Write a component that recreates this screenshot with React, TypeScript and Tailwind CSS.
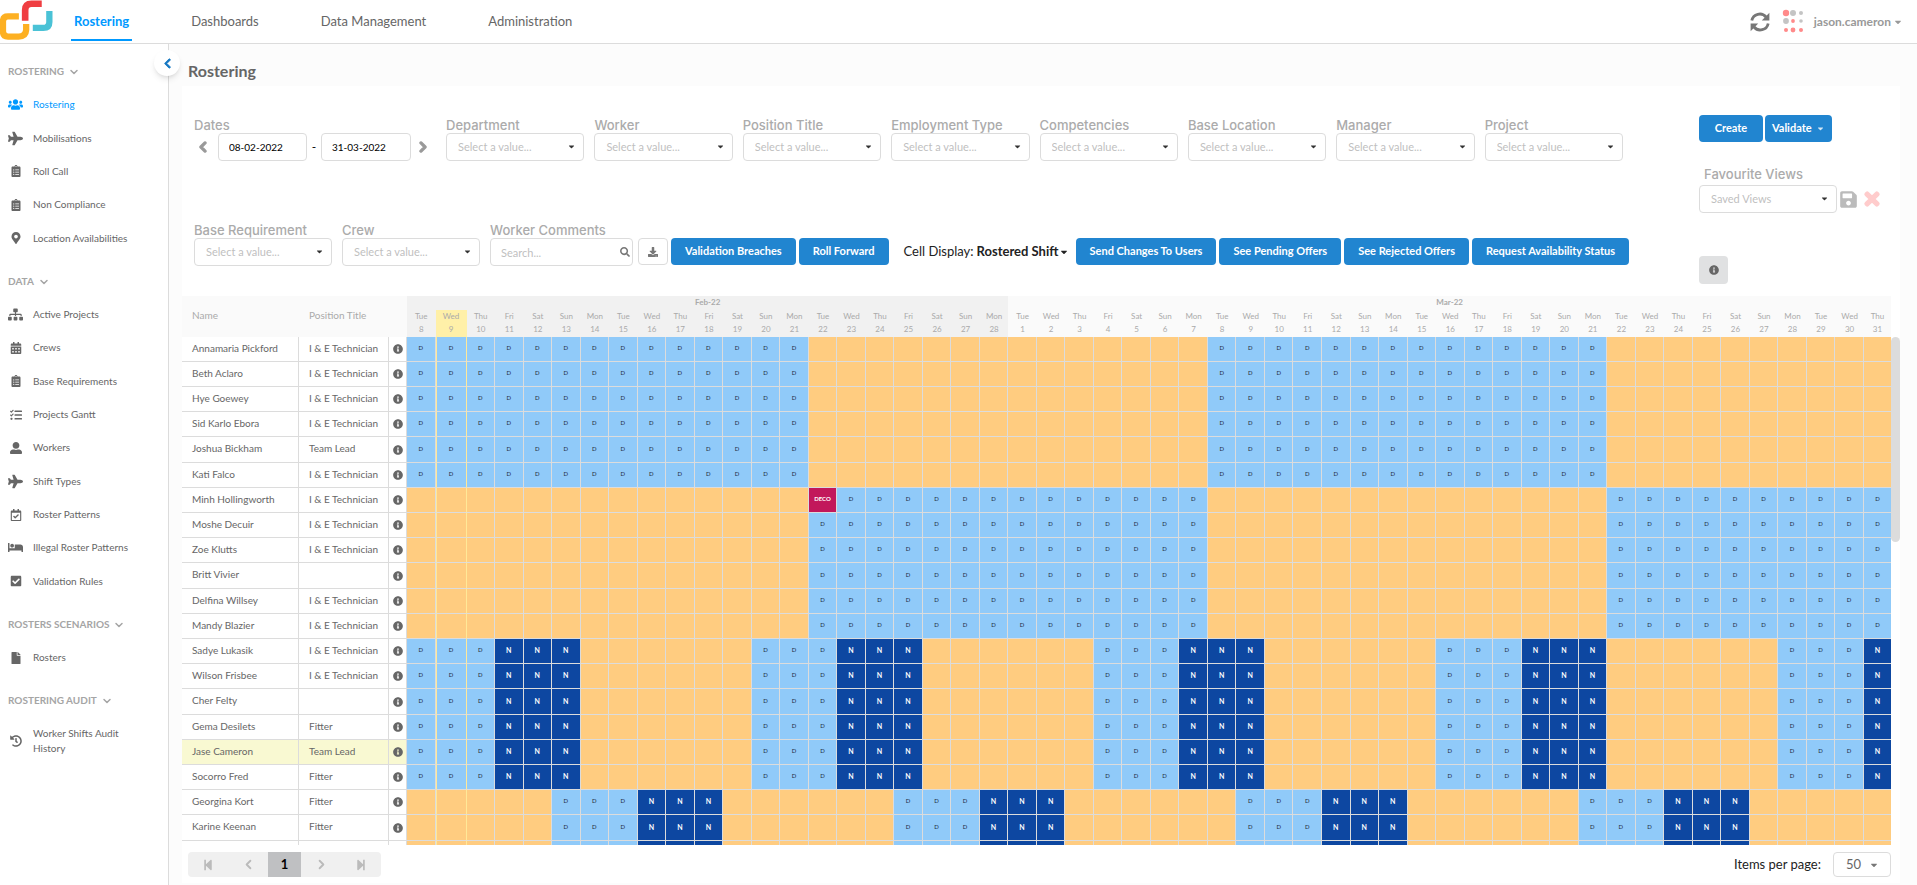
// App.tsx
import { useState } from "react";
import type { ReactNode } from "react";
import type { IconType } from "react-icons";
import {
  FaBed,
  FaCalendarAlt,
  FaCaretDown,
  FaCheckSquare,
  FaChevronLeft,
  FaChevronRight,
  FaClipboardList,
  FaDownload,
  FaFile,
  FaHistory,
  FaInfoCircle,
  FaMapMarkerAlt,
  FaPlane,
  FaRegCalendarCheck,
  FaSave,
  FaSearch,
  FaSitemap,
  FaStepBackward,
  FaStepForward,
  FaTasks,
  FaTimes,
  FaUserAlt,
  FaUsers,
} from "react-icons/fa";
import { FiChevronDown, FiChevronLeft, FiChevronRight } from "react-icons/fi";

interface NavItem {
  label: string;
  icon: IconType;
  wide?: boolean;
}

interface NavSection {
  title: string;
  listClass: string;
  items: NavItem[];
}

interface Worker {
  name: string;
  position: string;
  pattern: string;
}

const tabs = ["Rostering", "Dashboards", "Data Management", "Administration"];

const sections: NavSection[] = [
  {
    title: "ROSTERING",
    listClass: "h-[167px]",
    items: [
      { label: "Rostering", icon: FaUsers, wide: true },
      { label: "Mobilisations", icon: FaPlane, wide: true },
      { label: "Roll Call", icon: FaClipboardList },
      { label: "Non Compliance", icon: FaClipboardList },
      { label: "Location Availabilities", icon: FaMapMarkerAlt },
    ],
  },
  {
    title: "DATA",
    listClass: "h-[300px]",
    items: [
      { label: "Active Projects", icon: FaSitemap, wide: true },
      { label: "Crews", icon: FaCalendarAlt },
      { label: "Base Requirements", icon: FaClipboardList },
      { label: "Projects Gantt", icon: FaTasks },
      { label: "Workers", icon: FaUserAlt },
      { label: "Shift Types", icon: FaPlane, wide: true },
      { label: "Roster Patterns", icon: FaRegCalendarCheck },
      { label: "Illegal Roster Patterns", icon: FaBed, wide: true },
      { label: "Validation Rules", icon: FaCheckSquare },
    ],
  },
  {
    title: "ROSTERS SCENARIOS",
    listClass: "h-[33px]",
    items: [{ label: "Rosters", icon: FaFile }],
  },
  {
    title: "ROSTERING AUDIT",
    listClass: "h-[48px]",
    items: [{ label: "Worker Shifts Audit History", icon: FaHistory }],
  },
];

const filters = [
  "Department",
  "Worker",
  "Position Title",
  "Employment Type",
  "Competencies",
  "Base Location",
  "Manager",
  "Project",
];

// One letter per day: D = day shift, N = night shift, X = decompression, . = off
const TWO_WEEKS_ON = "DDDDDDDDDDDDDD..............DDDDDDDDDDDDDD..........";
const TWO_WEEKS_OFF = "..............DDDDDDDDDDDDDD..............DDDDDDDDDD";
const DECO_START = "..............XDDDDDDDDDDDDD..............DDDDDDDDDD";
const ROTATION_A = "DDDNNN......DDDNNN......DDDNNN......DDDNNN......DDDN";
const ROTATION_B = ".....DDDNNN......DDDNNN......DDDNNN......DDDNNN.....";

const workers: Worker[] = [
  { name: "Annamaria Pickford", position: "I & E Technician", pattern: TWO_WEEKS_ON },
  { name: "Beth Aclaro", position: "I & E Technician", pattern: TWO_WEEKS_ON },
  { name: "Hye Goewey", position: "I & E Technician", pattern: TWO_WEEKS_ON },
  { name: "Sid Karlo Ebora", position: "I & E Technician", pattern: TWO_WEEKS_ON },
  { name: "Joshua Bickham", position: "Team Lead", pattern: TWO_WEEKS_ON },
  { name: "Kati Falco", position: "I & E Technician", pattern: TWO_WEEKS_ON },
  { name: "Minh Hollingworth", position: "I & E Technician", pattern: DECO_START },
  { name: "Moshe Decuir", position: "I & E Technician", pattern: TWO_WEEKS_OFF },
  { name: "Zoe Klutts", position: "I & E Technician", pattern: TWO_WEEKS_OFF },
  { name: "Britt Vivier", position: "", pattern: TWO_WEEKS_OFF },
  { name: "Delfina Willsey", position: "I & E Technician", pattern: TWO_WEEKS_OFF },
  { name: "Mandy Blazier", position: "I & E Technician", pattern: TWO_WEEKS_OFF },
  { name: "Sadye Lukasik", position: "I & E Technician", pattern: ROTATION_A },
  { name: "Wilson Frisbee", position: "I & E Technician", pattern: ROTATION_A },
  { name: "Cher Felty", position: "", pattern: ROTATION_A },
  { name: "Gema Desilets", position: "Fitter", pattern: ROTATION_A },
  { name: "Jase Cameron", position: "Team Lead", pattern: ROTATION_A },
  { name: "Socorro Fred", position: "Fitter", pattern: ROTATION_A },
  { name: "Georgina Kort", position: "Fitter", pattern: ROTATION_B },
  { name: "Karine Keenan", position: "Fitter", pattern: ROTATION_B },
  { name: "", position: "", pattern: ROTATION_B },
];

const CURRENT_USER = "Jase Cameron";
const TODAY = 1; // index of Wed 9
const LAST_DAY = 51;
const weekdays = ["Tue", "Wed", "Thu", "Fri", "Sat", "Sun", "Mon"];

// 8 Feb - 31 Mar
const days = Array.from({ length: 52 }, (_, i) => ({
  weekday: weekdays[i % 7],
  date: i < 21 ? i + 8 : i - 20,
  headBg: i === TODAY ? "bg-[#fff0a8]" : i < 21 ? "bg-[#f1f1f1]" : "bg-[#fafafa]",
  colWidth: i === TODAY ? "w-[31px]" : i === LAST_DAY ? "w-[27px]" : "",
}));

const shiftStyle: Record<string, string> = {
  D: "bg-[#90caf9] text-[6px] text-gray-800",
  N: "bg-[#0d47a1] text-[7px] text-white font-bold",
  X: "bg-[#c2185b] text-[6px] text-white font-bold",
  ".": "bg-[#ffcc80]",
};

const shiftText: Record<string, string> = { D: "D", N: "N", X: "DECO", ".": "" };

const Logo = () => (
  <svg viewBox="0 0 160 120" className="w-[53px] h-10 shrink-0" fill="none">
    <path d="M57 49H24Q9 49 9 64V95Q9 110 24 110H56Q78 110 79 90V72" stroke="#fdb022" strokeWidth="19" />
    <path d="M76 62V30Q76 11 95 11H126" stroke="#ef3e42" strokeWidth="20" />
    <path d="M149 33V66Q149 84 131 84H99" stroke="#4ac2d6" strokeWidth="19" />
  </svg>
);

const RefreshIcon = () => (
  <svg viewBox="0 0 20 20" className="size-5" fill="none">
    <path d="M1.8 8.6A8.1 8.1 0 0 1 16 5" stroke="currentColor" strokeWidth="2.8" />
    <path d="M19.4.8V8.4H11.8Z" fill="currentColor" />
    <path d="M18.2 11.4A8.1 8.1 0 0 1 4 15" stroke="currentColor" strokeWidth="2.8" />
    <path d="M.6 19.2V11.6H8.2Z" fill="currentColor" />
  </svg>
);

const Dots = () => (
  <svg viewBox="0 0 22 26" className="w-[22px] h-[26px]">
    <circle cx="4" cy="4" r="3.2" fill="#ff8a8a" />
    <circle cx="11" cy="4" r="3" fill="#c4c4c4" />
    <circle cx="19" cy="4" r="2" fill="#c4c4c4" />
    <circle cx="4" cy="12" r="2.9" fill="#c4c4c4" />
    <circle cx="11" cy="12" r="1.9" fill="#ff8a8a" />
    <circle cx="19" cy="12" r="1.8" fill="#c4c4c4" />
    <circle cx="4" cy="21" r="2" fill="#ff8a8a" />
    <circle cx="11" cy="21" r="2.4" fill="#ff8a8a" />
    <circle cx="19" cy="21" r="2" fill="#ff8a8a" />
  </svg>
);

const FieldLabel = ({ id, children }: { id: string; children: ReactNode }) => (
  <label
    htmlFor={id}
    className="block font-['Inter',sans-serif] text-[13px] leading-4 font-medium text-[#ababab] whitespace-nowrap"
  >
    {children}
  </label>
);

const SelectBox = ({ id, placeholder }: { id: string; placeholder: string }) => (
  <div className="relative">
    <select
      id={id}
      className="block w-full h-7 pl-[11px] pr-5 appearance-none border border-[#dcdcdc] rounded bg-white text-[11px] text-[#bfbfbf]"
    >
      <option>{placeholder}</option>
    </select>
    <FaCaretDown className="absolute right-2 top-[9px] size-[9px] text-[#333] pointer-events-none" />
  </div>
);

const FilterSelect = ({ label, className }: { label: string; className: string }) => {
  const id = label.toLowerCase().replace(/ /g, "-");
  return (
    <div className={className}>
      <FieldLabel id={id}>{label}</FieldLabel>
      <SelectBox id={id} placeholder="Select a value..." />
    </div>
  );
};

const PrimaryButton = ({ children }: { children: ReactNode }) => (
  <button className="h-[27px] min-w-16 px-[14px] shrink-0 rounded bg-[#2185d0] text-[11px] font-bold text-white whitespace-nowrap">
    {children}
  </button>
);

const Sidebar = () => (
  <aside className="relative w-[169px] shrink-0 border-r border-[#dcdcdc] bg-white pt-[11px]">
    <button
      aria-label="Collapse menu"
      className="absolute -right-3 top-[6px] size-[26px] rounded-full bg-white shadow-md flex items-center justify-center text-[#1678c2]"
    >
      <FaChevronLeft className="size-[11px]" strokeWidth={40} />
    </button>
    <nav className="flex flex-col gap-[10px]">
      {sections.map((section) => (
        <div key={section.title}>
          <h2 className="flex items-center gap-1 h-[33px] pl-2 text-[10px] font-bold text-[#a5a5a5]">
            {section.title}
            <FiChevronDown className="size-3" strokeWidth={3} />
          </h2>
          <ul className={`grid auto-rows-fr ${section.listClass}`}>
            {section.items.map(({ label, icon: Icon, wide }) => (
              <li key={label}>
                <a
                  href="#"
                  className={`flex items-center gap-[10px] h-full pl-2 pr-7 text-[10px] leading-[15px] ${
                    label === "Rostering" ? "text-[#0099ff]" : "text-[#666]"
                  }`}
                >
                  <span className="flex w-[15px] shrink-0 justify-center">
                    <Icon className={wide ? "size-[15px]" : "size-3"} />
                  </span>
                  {label}
                </a>
              </li>
            ))}
          </ul>
        </div>
      ))}
    </nav>
  </aside>
);

const RosterTable = () => (
  <div className="flex flex-1 min-h-0">
    <div className="flex-1 overflow-hidden">
      <table className="w-full table-fixed border-separate border-spacing-0 text-[10px] text-[#666]">
        <colgroup>
          <col className="w-[117px]" />
          <col className="w-[90px]" />
          <col className="w-[18px]" />
          {days.map((day, i) => (
            <col key={i} className={day.colWidth} />
          ))}
        </colgroup>
        <thead className="text-[8px] leading-3 text-[#aaa]">
          <tr className="h-[14px]">
            <th rowSpan={3} className="bg-[#fafafa] pt-0 pb-1 pl-[10px] text-left text-[10px] font-normal">
              Name
            </th>
            <th rowSpan={3} className="bg-[#fafafa] pt-0 pb-1 pl-[10px] text-left text-[10px] font-normal">
              Position Title
            </th>
            <th rowSpan={3} className="bg-[#fafafa]" aria-label="Info" />
            <th colSpan={21} className="bg-[#f1f1f1] p-0 align-top font-bold">
              Feb-22
            </th>
            <th colSpan={31} className="bg-[#fafafa] p-0 align-top font-bold">
              Mar-22
            </th>
          </tr>
          <tr className="h-[13px]">
            {days.map((day, i) => (
              <th key={i} className={`p-0 align-top font-normal ${day.headBg}`}>
                {day.weekday}
              </th>
            ))}
          </tr>
          <tr className="h-[14px]">
            {days.map((day, i) => (
              <th key={i} className={`p-0 align-top font-normal ${day.headBg}`}>
                {day.date}
              </th>
            ))}
          </tr>
        </thead>
        <tbody>
          {workers.map((worker, row) => {
            const rowBg = worker.name === CURRENT_USER ? "bg-[#f9f9d2]" : "bg-white";
            return (
              <tr key={row} className={row % 5 === 4 ? "h-[26px]" : "h-[25px]"}>
                <td
                  className={`pt-0 pb-[2px] pl-[10px] pr-0 border-r border-b border-[#dcdcdc] whitespace-nowrap ${rowBg}`}
                >
                  {worker.name}
                </td>
                <td
                  className={`pt-0 pb-[2px] pl-[10px] pr-0 border-r border-b border-[#dcdcdc] whitespace-nowrap ${rowBg}`}
                >
                  {worker.position}
                </td>
                <td className={`p-0 border-r border-b border-[#dcdcdc] ${rowBg}`}>
                  <FaInfoCircle className="mx-auto size-[10px] text-[#666]" />
                </td>
                {worker.pattern.split("").map((shift, i) => (
                  <td
                    key={i}
                    className={`pt-0 px-0 pb-[2px] border-b border-b-[#dcdcdc] text-center leading-3 ${shiftStyle[shift]} ${
                      i === TODAY
                        ? "border-x border-x-[#ffe999]"
                        : i === LAST_DAY
                          ? ""
                          : "border-r border-r-[#dcdcdc]"
                    }`}
                  >
                    {shiftText[shift]}
                  </td>
                ))}
              </tr>
            );
          })}
        </tbody>
      </table>
    </div>
    <div className="w-[9px] pt-[41px]">
      <div className="h-[205px] rounded-full bg-[#dcdcdc]" />
    </div>
  </div>
);

const App: React.FC = () => {
  const [from, setFrom] = useState<string>("08-02-2022");
  const [to, setTo] = useState<string>("31-03-2022");
  const [comment, setComment] = useState<string>("");

  return (
    <div className="flex flex-col h-screen font-['Lato',sans-serif] bg-white">
      {/* Top bar */}
      <header className="flex h-11 shrink-0 border-b border-[#dcdcdc]">
        <Logo />
        <nav className="flex gap-14 ml-[18px]">
          {tabs.map((tab) => (
            <a
              key={tab}
              href="#"
              className={`h-[41px] px-[3px] pt-[11px] text-[13px] leading-5 ${
                tab === "Rostering" ? "font-bold text-[#0099ff] border-b-2 border-[#0099ff]" : "text-[#666]"
              }`}
            >
              {tab}
            </a>
          ))}
        </nav>
        <div className="flex items-center ml-auto pr-[14px]">
          <button aria-label="Refresh" className="mr-3 text-[#777]">
            <RefreshIcon />
          </button>
          <Dots />
          <button className="flex items-center gap-[2px] ml-[10px] text-xs font-bold text-[#999]">
            jason.cameron
            <FaCaretDown className="size-[10px]" />
          </button>
        </div>
      </header>

      <div className="flex flex-1 min-h-0">
        <Sidebar />
        <main className="flex flex-col flex-1 min-w-0 bg-[#fcfcfc] pl-[13px] pr-[17px] pb-[2px]">
          <h1 className="h-[42px] pt-[17px] pl-[6px] text-base leading-5 font-bold text-[#666]">Rostering</h1>

          <section className="flex flex-col flex-1 min-h-0 bg-white">
            <div className="flex h-[210px] shrink-0">
              <div className="flex-1 min-w-0 pl-3">
                {/* Filters, first row */}
                <div className="flex items-end pt-[31px]">
                  <div className="w-[252px] shrink-0">
                    <FieldLabel id="date-from">Dates</FieldLabel>
                    <div className="flex items-center">
                      <button aria-label="Previous period" className="flex w-6 pl-[3px] text-[#999]">
                        <FaChevronLeft className="size-3" strokeWidth={60} />
                      </button>
                      <input
                        id="date-from"
                        value={from}
                        onChange={(e) => setFrom(e.target.value)}
                        className="w-[89px] h-7 px-[10px] border border-[#dcdcdc] rounded text-[10px] text-black"
                      />
                      <span className="w-[14px] text-center text-xs">-</span>
                      <input
                        aria-label="Date to"
                        value={to}
                        onChange={(e) => setTo(e.target.value)}
                        className="w-[90px] h-7 px-[10px] border border-[#dcdcdc] rounded text-[10px] text-black"
                      />
                      <button aria-label="Next period" className="pl-[6px] text-[#999]">
                        <FaChevronRight className="size-3" strokeWidth={60} />
                      </button>
                    </div>
                  </div>
                  <div className="flex flex-1 gap-[10px] max-w-[1177px]">
                    {filters.map((label) => (
                      <FilterSelect key={label} label={label} className="flex-1" />
                    ))}
                  </div>
                </div>

                {/* Filters, second row */}
                <div className="flex items-end pt-[61px]">
                  <FilterSelect label="Base Requirement" className="w-[138px] shrink-0 mr-[10px]" />
                  <FilterSelect label="Crew" className="w-[138px] shrink-0 mr-[10px]" />
                  <div className="relative w-[143px] shrink-0 mr-[5px]">
                    <FieldLabel id="comments">Worker Comments</FieldLabel>
                    <input
                      id="comments"
                      placeholder="Search..."
                      value={comment}
                      onChange={(e) => setComment(e.target.value)}
                      className="block w-full h-7 pl-[10px] pr-6 border border-[#dcdcdc] rounded text-[11px] placeholder:text-[#bfbfbf]"
                    />
                    <FaSearch className="absolute right-[3px] bottom-[9px] size-[10px] text-[#777]" />
                  </div>
                  <div className="flex shrink-0 items-center gap-[3px] pb-px">
                    <button
                      aria-label="Download"
                      className="flex items-center justify-center w-[30px] h-[27px] border border-[#dcdcdc] rounded text-[#777]"
                    >
                      <FaDownload className="size-[10px]" />
                    </button>
                    <PrimaryButton>Validation Breaches</PrimaryButton>
                    <PrimaryButton>Roll Forward</PrimaryButton>
                    <div className="relative flex shrink-0 items-center ml-3 mr-1 text-[13px] text-[#222] whitespace-nowrap">
                      <label htmlFor="cell-display">Cell Display:</label>
                      <select id="cell-display" className="ml-[3px] pr-[10px] appearance-none font-bold">
                        <option>Rostered Shift</option>
                      </select>
                      <FaCaretDown className="absolute right-0 size-[10px] pointer-events-none" />
                    </div>
                    <PrimaryButton>Send Changes To Users</PrimaryButton>
                    <PrimaryButton>See Pending Offers</PrimaryButton>
                    <PrimaryButton>See Rejected Offers</PrimaryButton>
                    <PrimaryButton>Request Availability Status</PrimaryButton>
                  </div>
                </div>
              </div>

              {/* Actions and saved views */}
              <div className="w-[201px] shrink-0 ml-[70px] pt-[29px]">
                <div className="flex gap-[2px]">
                  <PrimaryButton>Create</PrimaryButton>
                  <button className="flex items-center gap-1 h-[27px] px-[7px] rounded bg-[#2185d0] text-[11px] font-bold text-white">
                    Validate
                    <FaCaretDown className="size-[9px] opacity-80" />
                  </button>
                </div>
                <div className="mt-6 pl-[5px]">
                  <FieldLabel id="views">Favourite Views</FieldLabel>
                </div>
                <div className="flex items-center mt-[3px]">
                  <div className="w-[138px]">
                    <SelectBox id="views" placeholder="Saved Views" />
                  </div>
                  <button aria-label="Save view" className="ml-[2px] text-[#bbb]">
                    <FaSave className="size-[19px]" />
                  </button>
                  <button aria-label="Delete view" className="ml-1 text-[#ffcccc]">
                    <FaTimes className="size-5" strokeWidth={40} />
                  </button>
                </div>
                <button
                  aria-label="Legend"
                  className="flex items-center justify-center w-[29px] h-7 mt-[43px] rounded bg-[#e0e1e2] text-[#666]"
                >
                  <FaInfoCircle className="size-[10px]" />
                </button>
              </div>
            </div>

            <RosterTable />

            {/* Pagination */}
            <footer className="flex items-center justify-between shrink-0 pt-[7px] pb-[6px] pl-[6px] pr-[9px]">
              <div className="flex h-[25px] rounded bg-[#f0f0f0] overflow-hidden text-[#bbb]">
                <button aria-label="First page" className="flex items-center justify-center w-10">
                  <FaStepBackward className="size-3" />
                </button>
                <button aria-label="Previous page" className="flex items-center justify-center w-10">
                  <FiChevronLeft className="size-[15px]" strokeWidth={3} />
                </button>
                <button className="w-[33px] bg-[#bfc0c2] text-[13px] font-bold text-black">1</button>
                <button aria-label="Next page" className="flex items-center justify-center w-10">
                  <FiChevronRight className="size-[15px]" strokeWidth={3} />
                </button>
                <button aria-label="Last page" className="flex items-center justify-center w-10">
                  <FaStepForward className="size-3" />
                </button>
              </div>
              <div className="relative flex items-center gap-3">
                <label htmlFor="page-size" className="text-[13px] text-[#222]">
                  Items per page:
                </label>
                <select
                  id="page-size"
                  className="w-[58px] h-[25px] pl-3 appearance-none border border-[#dcdcdc] rounded bg-white text-[13px] text-[#666]"
                >
                  <option>50</option>
                </select>
                <FaCaretDown className="absolute right-3 size-[10px] text-[#777] pointer-events-none" />
              </div>
            </footer>
          </section>
        </main>
      </div>
    </div>
  );
};

export default App;
